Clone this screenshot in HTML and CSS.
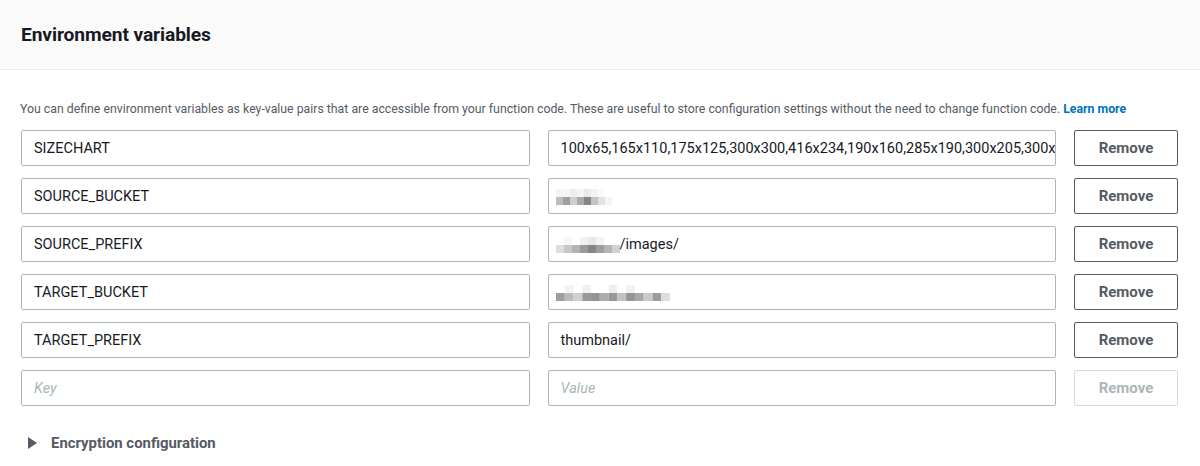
FILE: index.html
```html
<!DOCTYPE html>
<html lang="en">
<head>
<meta charset="utf-8">
<title>Environment variables</title>
<link rel="stylesheet" href="styles.css">
</head>
<body>
<section class="panel">
  <header class="panel-header">
    <h2 class="panel-title">Environment variables</h2>
  </header>
  <div class="panel-body">
    <p class="desc">You can define environment variables as key-value pairs that are accessible from your function code. These are useful to store configuration settings without the need to change function code. <a class="link" href="#">Learn more</a></p>
    <div class="rows">
      <div class="field"><span class="text">SIZECHART</span></div>
      <div class="field"><span class="text">100x65,165x110,175x125,300x300,416x234,190x160,285x190,300x205,300x</span></div>
      <button class="btn">Remove</button>

      <div class="field"><span class="text">SOURCE_BUCKET</span></div>
      <div class="field">
        <svg class="blur" width="56" height="16" viewBox="0 0 8 2" preserveAspectRatio="none">
          <rect x="0" y="0" width="1" height="1" fill="#f4f4f4"/><rect x="1" y="0" width="1" height="1" fill="#f6f6f6"/><rect x="2" y="0" width="1" height="1" fill="#ededed"/><rect x="3" y="0" width="1" height="1" fill="#f5f5f5"/><rect x="4" y="0" width="1" height="1" fill="#eaeaea"/><rect x="5" y="0" width="1" height="1" fill="#f3f3f3"/><rect x="6" y="0" width="1" height="1" fill="#fafafa"/>
          <rect x="0" y="1" width="1" height="1" fill="#bdbdbd"/><rect x="1" y="1" width="1" height="1" fill="#9f9f9f"/><rect x="2" y="1" width="1" height="1" fill="#cfcfcf"/><rect x="3" y="1" width="1" height="1" fill="#aaaaaa"/><rect x="4" y="1" width="1" height="1" fill="#858585"/><rect x="5" y="1" width="1" height="1" fill="#c4c4c4"/><rect x="6" y="1" width="1" height="1" fill="#e2e2e2"/><rect x="7" y="1" width="1" height="1" fill="#f4f4f4"/>
        </svg>
      </div>
      <button class="btn">Remove</button>

      <div class="field"><span class="text">SOURCE_PREFIX</span></div>
      <div class="field">
        <svg class="blur" width="64" height="16" viewBox="0 0 8 2" preserveAspectRatio="none">
          <rect x="1" y="0" width="1" height="1" fill="#f6f6f6"/><rect x="3" y="0" width="1" height="1" fill="#f1f1f1"/><rect x="4" y="0" width="1" height="1" fill="#e9e9e9"/><rect x="5" y="0" width="1" height="1" fill="#f4f4f4"/>
          <rect x="0" y="1" width="1" height="1" fill="#dedede"/><rect x="1" y="1" width="1" height="1" fill="#c8c8c8"/><rect x="2" y="1" width="1" height="1" fill="#b4b4b4"/><rect x="3" y="1" width="1" height="1" fill="#9b9b9b"/><rect x="4" y="1" width="1" height="1" fill="#858585"/><rect x="5" y="1" width="1" height="1" fill="#9e9e9e"/><rect x="6" y="1" width="1" height="1" fill="#b5b5b5"/><rect x="7" y="1" width="1" height="1" fill="#d2d2d2"/>
        </svg><span class="text">/images/</span>
      </div>
      <button class="btn">Remove</button>

      <div class="field"><span class="text">TARGET_BUCKET</span></div>
      <div class="field">
        <svg class="blur" width="114" height="16" viewBox="0 0 13 2" preserveAspectRatio="none">
          <rect x="1" y="0" width="1" height="1" fill="#f3f3f3"/><rect x="3" y="0" width="1" height="1" fill="#f0f0f0"/><rect x="6" y="0" width="1" height="1" fill="#eeeeee"/><rect x="8" y="0" width="1" height="1" fill="#f2f2f2"/>
          <rect x="0" y="1" width="1" height="1" fill="#9e9e9e"/><rect x="1" y="1" width="1" height="1" fill="#bbbbbb"/><rect x="2" y="1" width="1" height="1" fill="#d0d0d0"/><rect x="3" y="1" width="1" height="1" fill="#999999"/><rect x="4" y="1" width="1" height="1" fill="#939393"/><rect x="5" y="1" width="1" height="1" fill="#adadad"/><rect x="6" y="1" width="1" height="1" fill="#989898"/><rect x="7" y="1" width="1" height="1" fill="#c2c2c2"/><rect x="8" y="1" width="1" height="1" fill="#949494"/><rect x="9" y="1" width="1" height="1" fill="#a8a8a8"/><rect x="10" y="1" width="1" height="1" fill="#cbcbcb"/><rect x="11" y="1" width="1" height="1" fill="#9d9d9d"/><rect x="12" y="1" width="1" height="1" fill="#dedede"/>
        </svg>
      </div>
      <button class="btn">Remove</button>

      <div class="field"><span class="text">TARGET_PREFIX</span></div>
      <div class="field"><span class="text">thumbnail/</span></div>
      <button class="btn">Remove</button>

      <div class="field"><span class="placeholder">Key</span></div>
      <div class="field"><span class="placeholder">Value</span></div>
      <button class="btn btn-disabled" disabled>Remove</button>
    </div>
    <div class="expander">
      <svg class="caret" width="9" height="12" viewBox="0 0 9 12"><polygon points="0,0 9,6 0,12" fill="#545b64"/></svg>
      <span class="expander-label">Encryption configuration</span>
    </div>
  </div>
</section>
</body>
</html>
```

FILE: styles.css
```css
* { box-sizing: border-box; }
html, body {
  margin: 0;
  padding: 0;
  background: #ffffff;
  font-family: Roboto, "Liberation Sans", Arial, sans-serif;
  color: #16191f;
}
.panel {
  width: 1200px;
  height: 466px;
  overflow: hidden;
}
.panel-header {
  height: 70px;
  background: #fafafa;
  border-bottom: 1px solid #eaeded;
  padding: 0 21px;
  display: flex;
  align-items: center;
}
.panel-title {
  margin: 0;
  font-size: 19.2px;
  font-weight: 700;
  color: #16191f;
  letter-spacing: -0.1px;
}
.panel-body {
  padding: 0 22px 0 20px;
}
.desc {
  margin: 0;
  padding-top: 31px;
  height: 60px;
  font-size: 12.3px;
  line-height: 16px;
  color: #545b64;
  white-space: nowrap;
}
.link {
  color: #0073bb;
  font-weight: 700;
  text-decoration: none;
}
.rows {
  display: grid;
  grid-template-columns: 1fr 1fr 104px;
  column-gap: 18px;
  row-gap: 12px;
  padding-left: 1px;
}
.field {
  height: 36px;
  border: 1px solid #aab7b8;
  border-radius: 2px;
  padding: 1px 12px 0 12px;
  display: flex;
  align-items: center;
  overflow: hidden;
  white-space: nowrap;
  font-size: 14.5px;
  color: #16191f;
}
.text { flex: none; }
.placeholder {
  color: #aab7b8;
  font-style: italic;
}
.blur { flex: none; display: block; margin-left: -5px; }
.btn {
  height: 36px;
  border: 1px solid #545b64;
  border-radius: 2px;
  background: #ffffff;
  color: #545b64;
  font-family: inherit;
  font-size: 15px;
  font-weight: 700;
  padding: 0;
}
.btn-disabled {
  border-color: #d5dbdb;
  color: #aab7b8;
}
.expander {
  display: flex;
  align-items: center;
  gap: 14px;
  padding: 28px 0 0 8px;
}
.caret { display: block; }
.expander-label {
  font-size: 14.9px;
  font-weight: 700;
  color: #545b64;
}
```
